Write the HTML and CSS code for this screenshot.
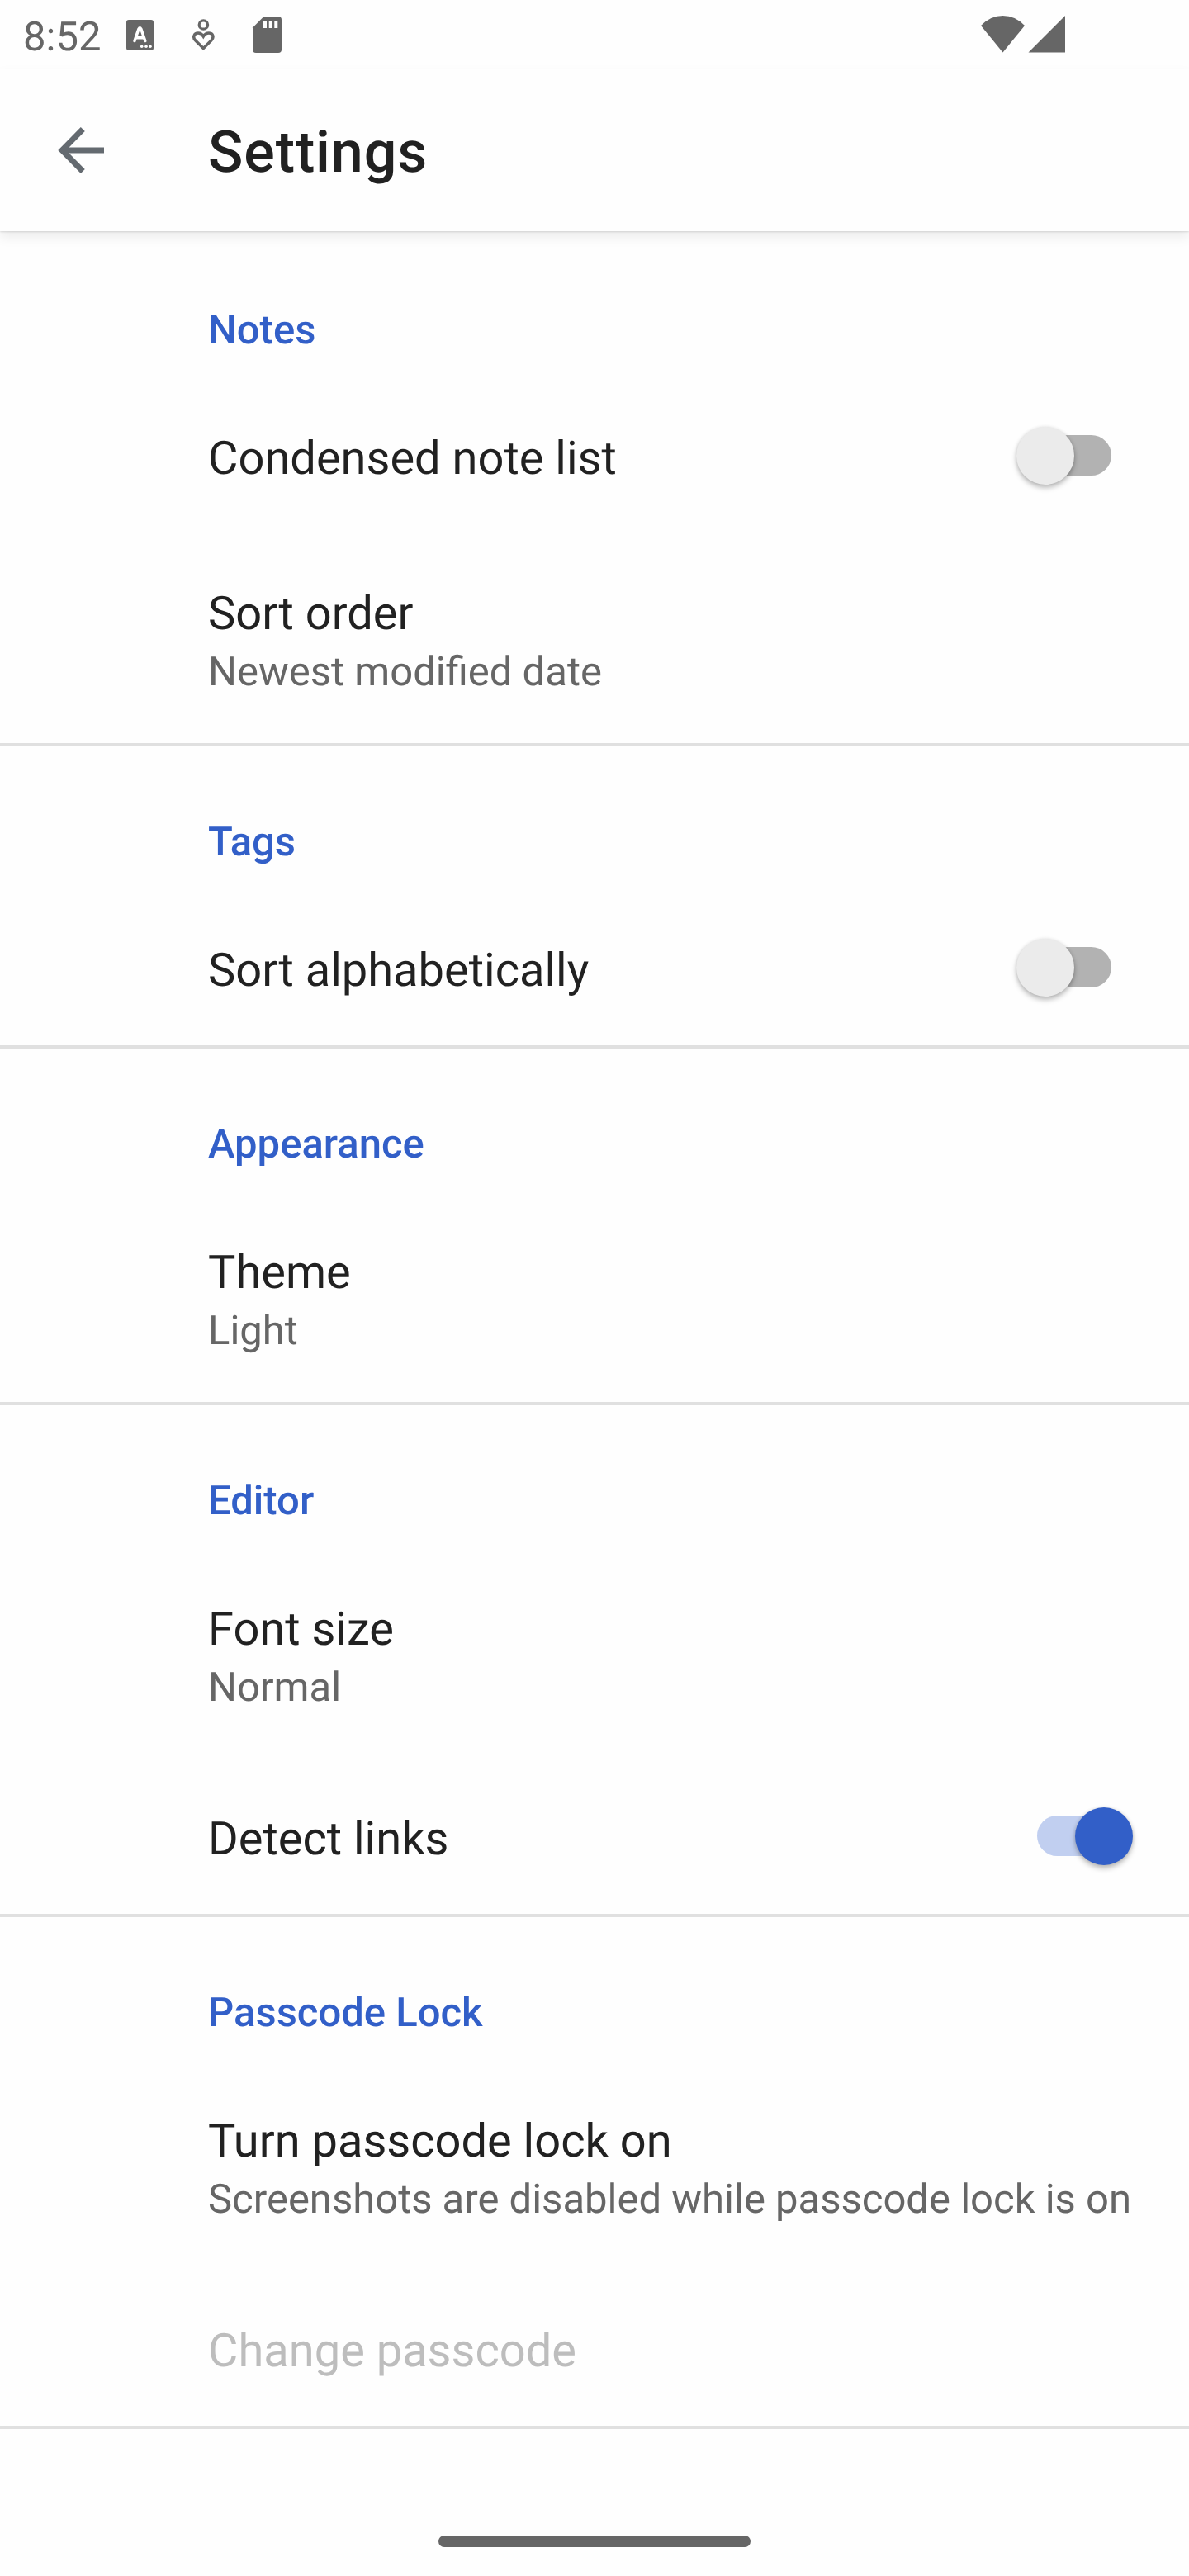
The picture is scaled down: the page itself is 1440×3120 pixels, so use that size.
FILE: index.html
```html
<!DOCTYPE html>
<html lang="en">
<head>
<meta charset="utf-8">
<title>Settings</title>
<link rel="stylesheet" href="styles.css">
</head>
<body>
<div class="statusbar">
  <span class="clock">8:52</span>
  <svg class="status-left" width="200" height="84" viewBox="150 0 200 84" fill="#666">
    <rect x="153" y="24" width="33" height="37" rx="3"/>
    <path d="M163 49.500L168 35Q169.400 32.500 170.800 35L175.800 49.500M165.500 45.800H173.500" fill="none" stroke="#fff" stroke-width="3.500" stroke-linecap="round"/>
    <g fill="#fff"><circle cx="171.700" cy="56.300" r="1.800"/><circle cx="177" cy="56.300" r="1.800"/><circle cx="182" cy="56.300" r="1.800"/></g>
    <circle cx="246.400" cy="30" r="5.200" fill="none" stroke="#666" stroke-width="3.200"/>
    <path d="M246.300 58.500L236.500 48.700C233.100 45.300 235 40 240 40C243 40 245 41.800 246.300 44C247.600 41.800 250 40 253 40C258 40 259.500 45.300 256.100 48.700Z" fill="none" stroke="#666" stroke-width="3.500"/>
    <path d="M319.500 20H337Q341 20 341 24V60Q341 64 337 64H310Q306 64 306 60V33.500Z"/>
    <path d="M319 25h4v9h-4zM325.700 25h4v9h-4zM332.300 25h4v9h-4z" fill="#fff"/>
  </svg>
  <svg class="status-right" width="110" height="84" viewBox="1184 0 110 84" fill="#666">
    <path d="M1188 31Q1199.500 19 1214.500 19Q1229.500 19 1241 31L1214.500 63.500Z"/>
    <path d="M1290 19V63.500H1245.500Z"/>
  </svg>
</div>
<header class="appbar">
  <svg class="back" width="56" height="56" viewBox="0 0 56 56" fill="none" stroke="#646a70" stroke-width="7"><path d="M56 28H6M30.300 2.500L5.200 28L30.300 53.500"/></svg>
  <h1 class="title">Settings</h1>
</header>
<main>
  <section class="group">
    <h2 class="category">Notes</h2>
    <div class="row"><div class="label">Condensed note list</div><div class="switch"><div class="thumb"></div></div></div>
    <div class="row double"><div class="label">Sort order</div><div class="summary">Newest modified date</div></div>
  </section>
  <section class="group">
    <h2 class="category">Tags</h2>
    <div class="row"><div class="label">Sort alphabetically</div><div class="switch"><div class="thumb"></div></div></div>
  </section>
  <section class="group">
    <h2 class="category">Appearance</h2>
    <div class="row double"><div class="label">Theme</div><div class="summary">Light</div></div>
  </section>
  <section class="group">
    <h2 class="category">Editor</h2>
    <div class="row double"><div class="label">Font size</div><div class="summary">Normal</div></div>
    <div class="row"><div class="label">Detect links</div><div class="switch on"><div class="thumb"></div></div></div>
  </section>
  <section class="group">
    <h2 class="category">Passcode Lock</h2>
    <div class="row double"><div class="label">Turn passcode lock on</div><div class="summary">Screenshots are disabled while passcode lock is on</div></div>
    <div class="row disabled"><div class="label">Change passcode</div></div>
  </section>
</main>
<footer class="navbar"><div class="handle"></div></footer>
</body>
</html>
```
FILE: styles.css
```css
* { box-sizing: border-box; }
body {
  margin: 0;
  width: 1440px;
  height: 3120px;
  display: flex;
  flex-direction: column;
  background: #fefefe;
  color: #212121;
  font-family: Roboto, sans-serif;
  text-rendering: geometricPrecision;
  overflow: hidden;
}
.statusbar {
  height: 84px;
  display: flex;
}
.clock {
  width: 150px;
  padding: 16px 0 0 28px;
  font-size: 49px;
  line-height: 57px;
  color: #666;
}
.status-right { margin-left: 834px; }
.appbar {
  height: 196px;
  display: flex;
  align-items: flex-start;
  background: #fefefe;
  box-shadow: 0 1px 2px rgba(0,0,0,.12), 0 7px 14px rgba(0,0,0,.08);
}
.back { margin: 70px 0 0 70px; }
.title {
  margin: 60px 0 0 126px;
  font-size: 70px;
  line-height: 82px;
  font-weight: 500;
  letter-spacing: .9px;
}
.group { border-bottom: 4px solid #e0e0e0; margin-bottom: -4px; }
.category {
  margin: 0;
  height: 180px;
  padding: 91px 0 0 252px;
  font-size: 49px;
  line-height: 57px;
  font-weight: 500;
  color: #325fc8;
}
.row {
  height: 186px;
  padding: 62px 68px 0 252px;
  display: flex;
  justify-content: space-between;
}
.row + .row { margin-top: 2px; }
.row.double { height: 252px; flex-direction: column; justify-content: flex-start; }
.label { font-size: 56px; line-height: 66px; }
.summary { font-size: 49px; line-height: 57px; margin-top: 9px; color: #666; white-space: nowrap; }
.disabled { color: #bdbdbd; }
.switch {
  width: 90px;
  height: 49px;
  margin: 5px 26px 0 0;
  border-radius: 25px;
  background: #b2b2b2;
}
.thumb {
  width: 70px;
  height: 70px;
  margin: -10px 0 0 -25px;
  border-radius: 50%;
  background: #ebebeb;
  box-shadow: 0 4px 6px rgba(0,0,0,.26), 0 0 4px rgba(0,0,0,.1);
}
.switch.on { background: #c1cff0; }
.switch.on .thumb { margin-left: 46px; background: #325fc8; }
.navbar {
  margin-top: auto;
  height: 49px;
  display: flex;
  justify-content: center;
}
.handle { width: 378px; height: 14px; border-radius: 7px; background: #666; }
```
